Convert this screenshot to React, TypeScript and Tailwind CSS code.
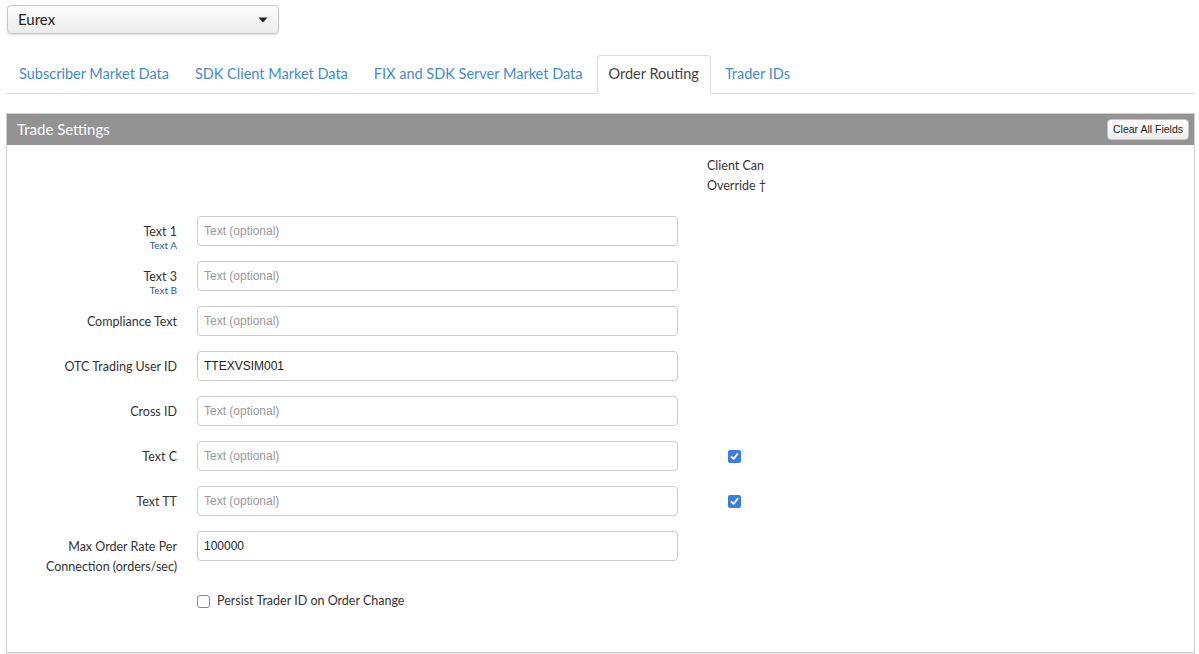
import React from 'react'

const tabs = [
  { label: 'Subscriber Market Data' },
  { label: 'SDK Client Market Data' },
  { label: 'FIX and SDK Server Market Data' },
  { label: 'Order Routing', active: true },
  { label: 'Trader IDs' },
]

type Row = {
  label: string
  sub?: string
  value?: string
  override?: boolean
  lines?: string[]
}

const rows: Row[] = [
  { label: 'Text 1', sub: 'Text A' },
  { label: 'Text 3', sub: 'Text B' },
  { label: 'Compliance Text' },
  { label: 'OTC Trading User ID', value: 'TTEXVSIM001' },
  { label: 'Cross ID' },
  { label: 'Text C', override: true },
  { label: 'Text TT', override: true },
  { label: 'Max Order Rate Per', lines: ['Max Order Rate Per', 'Connection (orders/sec)'], value: '100000' },
]

const labelFont = "font-['Lato','Noto_Sans',sans-serif]"

export default function App() {
  return (
    <div className={`min-h-screen bg-white pl-[6px] pr-[4px] text-[#333] ${labelFont}`}>
      <div className="pt-[5px] pl-px">
        <button
          type="button"
          className="flex h-[29px] w-[272px] items-center justify-between rounded-[4px] border border-[#c9c9c9] bg-gradient-to-b from-[#fdfdfd] to-[#ececec] pl-[10px] pr-[10px] text-[15px] text-[#222] shadow-[0_1px_2px_rgba(0,0,0,0.15)]"
        >
          <span>Eurex</span>
          <svg width="10" height="6" viewBox="0 0 10 6">
            <path d="M0.5 0.5h9L5 5.5z" fill="#222" />
          </svg>
        </button>
      </div>

      <ul className="mt-[21px] flex border-b border-[#dddddd] pl-px">
        {tabs.map((t) => (
          <li key={t.label} className="-mb-px mr-[2px]">
            <span
              className={
                t.active
                  ? 'block h-[39px] rounded-t-[4px] border border-[#dddddd] border-b-white bg-white px-[11px] pt-[7px] text-[14.5px] text-[#444]'
                  : 'block h-[39px] border border-transparent px-[11px] pt-[7px] text-[14.5px] text-[#3f8bd2]'
              }
            >
              {t.label}
            </span>
          </li>
        ))}
      </ul>

      <section className="mt-[19px] border border-[#cfcfcf] shadow-[0_1px_1px_rgba(0,0,0,0.08)]">
        <div className="flex h-[31px] items-center justify-between bg-[#939393] pl-[10px] pr-[5px]">
          <h2 className="text-[15px] text-white">Trade Settings</h2>
          <button
            type="button"
            className="h-[21px] rounded-[4px] border border-[#c4c4c4] bg-gradient-to-b from-white to-[#efefef] px-[5px] font-['Liberation_Sans',Arial,sans-serif] text-[10.5px] text-[#222]"
          >
            Clear All Fields
          </button>
        </div>

        <div className="h-[507px] pt-[11px]">
          <div className="flex">
            <div className="w-[700px] shrink-0" />
            <div className="text-[12.5px] leading-5 text-[#333]">
              <div>Client Can</div>
              <div>Override †</div>
            </div>
          </div>

          <div className="mt-[20px] flex flex-col gap-[15px]">
            {rows.map((r) => (
              <div key={r.label} className="flex h-[30px] items-start">
                <div className="w-[170px] shrink-0 pt-[6px] text-right text-[12.5px] leading-5 text-[#333]">
                  {r.lines ? (
                    r.lines.map((l) => <div key={l} className="whitespace-nowrap">{l}</div>)
                  ) : (
                    <div className="whitespace-nowrap">{r.label}</div>
                  )}
                  {r.sub ? (
                    <div className="-mt-[3px] text-[10px] leading-3 text-[#2d6090]">{r.sub}</div>
                  ) : null}
                </div>
                <input
                  type="text"
                  readOnly
                  defaultValue={r.value}
                  placeholder={r.value ? undefined : 'Text (optional)'}
                  className="ml-[20px] h-[30px] w-[481px] rounded-[4px] border border-[#cccccc] bg-white px-[6px] font-['Liberation_Sans',Arial,sans-serif] text-[12px] text-[#222] placeholder:text-[#999] focus:outline-none"
                />
                <div className="ml-[30px] flex h-[30px] w-[53px] items-center justify-center">
                  {r.override ? <Checked /> : null}
                </div>
              </div>
            ))}
          </div>

          <label className="mt-[31px] ml-[190px] flex items-center gap-[7px] text-[12.5px] text-[#333]">
            <span className="block h-[13px] w-[13px] rounded-[3px] border border-[#888] bg-white" />
            <span>Persist Trader ID on Order Change</span>
          </label>
        </div>
      </section>
    </div>
  )
}

function Checked() {
  return (
    <span className="flex h-[13px] w-[13px] items-center justify-center rounded-[2px] bg-[#3a7ee4]">
      <svg width="9" height="9" viewBox="0 0 9 9">
        <path d="M1.5 4.8L3.6 6.9L7.6 1.8" fill="none" stroke="white" strokeWidth="1.8" strokeLinecap="round" strokeLinejoin="round" />
      </svg>
    </span>
  )
}
